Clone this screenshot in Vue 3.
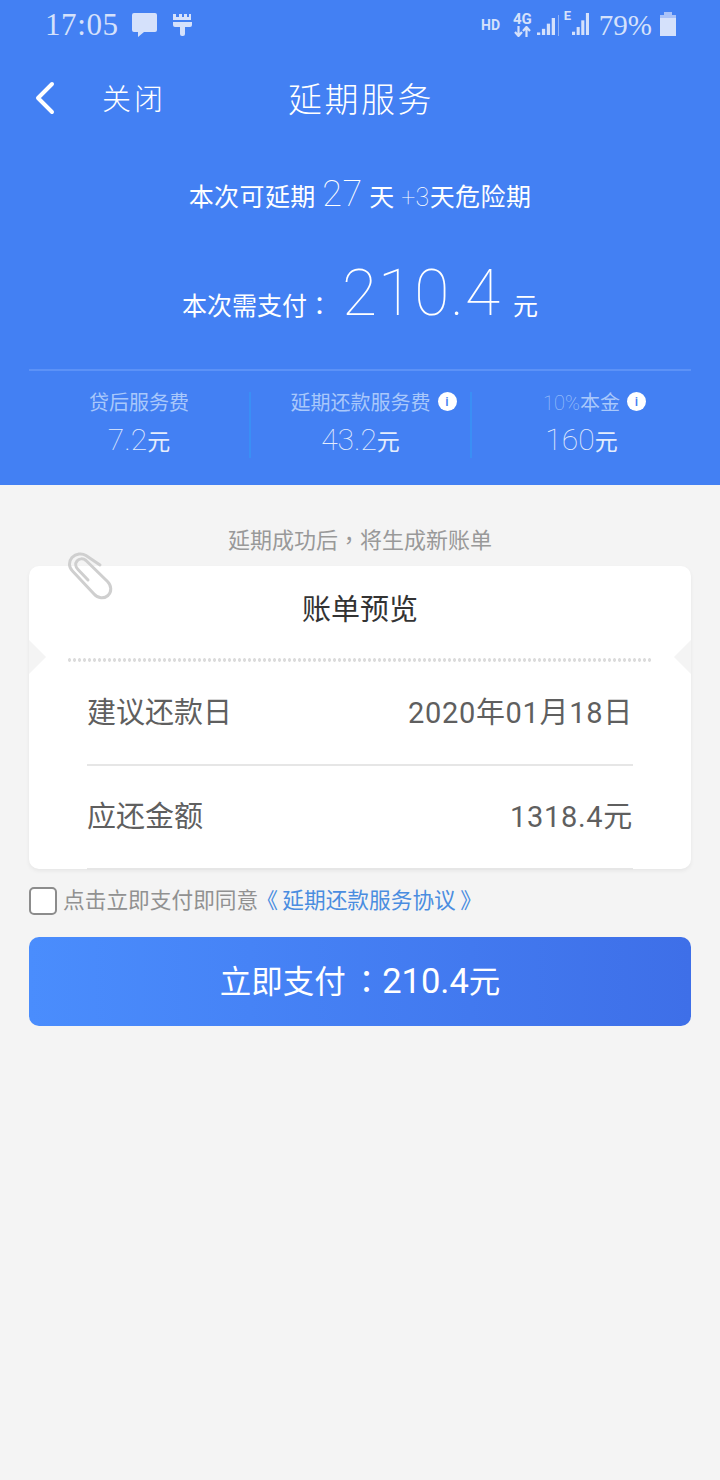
<template>
  <div class="page">
    <header class="hero">
      <div class="status-bar">
        <div class="status-left">
          <span class="time">17:05</span>
          <svg class="ico-msg" width="27" height="26" viewBox="0 0 27 26">
            <path d="M3 1h21a2 2 0 0 1 2 2v15a2 2 0 0 1-2 2H13l-6 5v-5H3a2 2 0 0 1-2-2V3a2 2 0 0 1 2-2z" fill="#d5e1fb" />
          </svg>
          <svg class="ico-brush" width="19" height="22" viewBox="0 0 19 22">
            <path d="M0 0h3v3h3V0h3v3h2V0h3v3h2V0h2v6H0zM0 8h19v3a2 2 0 0 1-2 2h-5v7a2 2 0 0 1-2 2H9a2 2 0 0 1-2-2v-7H2a2 2 0 0 1-2-2z" fill="#d5e1fb" />
          </svg>
        </div>
        <div class="status-right">
          <span class="hd">HD</span>
          <div class="net">
            <span class="net-label">4G</span>
            <svg width="17" height="11" viewBox="0 0 17 11">
              <path d="M4.500 0v9M1 6l3.500 4L8 6M12.500 11V2M9 5l3.500-4L16 5" stroke="#d5e1fb" stroke-width="2.200" fill="none" />
            </svg>
          </div>
          <svg class="bars bars-a" width="18" height="17" viewBox="0 0 22 24" preserveAspectRatio="none">
            <rect v-for="b in bars" :key="b.x" :x="b.x" :y="b.y" width="4" :height="24 - b.y" fill="#d5e1fb" />
          </svg>
          <span class="sep"></span>
          <span class="net-e">E</span>
          <svg class="bars bars-b" width="17" height="22" viewBox="0 0 22 24" preserveAspectRatio="none">
            <rect v-for="b in bars" :key="b.x" :x="b.x" :y="b.y" width="4" :height="24 - b.y" fill="#d5e1fb" />
          </svg>
          <span class="battery-text">79%</span>
          <svg class="battery" width="16" height="24" viewBox="0 0 16 24">
            <path d="M4 0h8v3H4z" fill="#a9c2f8" />
            <path d="M0 3h16v3H0z" fill="#a9c2f8" />
            <path d="M0 6h16v18H0z" fill="#d5e1fb" />
          </svg>
        </div>
      </div>

      <nav class="nav">
        <svg class="back" width="22" height="34" viewBox="0 0 22 34">
          <path d="M18 3L4 17l14 14" stroke="#fff" stroke-width="4" stroke-linecap="round" stroke-linejoin="round" fill="none" />
        </svg>
        <span class="close">关闭</span>
        <h1 class="title">延期服务</h1>
      </nav>

      <p class="days">本次可延期 <span class="thin big">27</span> 天 <span class="thin">+3</span>天危险期</p>
      <p class="pay">本次需支付<span class="punct">：</span><span class="pay-num">210.4</span><span>元</span></p>

      <div class="fees">
        <div v-for="fee in fees" :key="fee.value" class="fee">
          <div class="fee-label">
            <span class="fee-text">
              <span v-if="fee.pct" class="pct">{{ fee.pct }}</span>{{ fee.label }}
              <span v-if="fee.info" class="info">i</span>
            </span>
          </div>
          <div class="fee-value"><span class="thin">{{ fee.value }}</span>元</div>
        </div>
      </div>
    </header>

    <main class="content">
      <p class="hint">延期成功后<span class="punct">，</span>将生成新账单</p>

      <section class="card">
        <svg class="clip" width="46" height="50" viewBox="0 0 46 50">
          <path d="M33 13L19 3.500C15 1 9 1.500 5 5.500C1.500 9.500 1.500 15 5.500 19L27 42C31 46.500 37 47 41 43.500C45 39.500 44.500 33.500 40.500 29.500L19 8.500C16 6 12 6.500 10 9C8 11.500 8.500 15 11 17.500L21 28" stroke="#cfcfcf" stroke-width="3" fill="none" stroke-linecap="round" />
        </svg>
        <i class="notch notch-left"></i>
        <i class="notch notch-right"></i>
        <h2 class="card-title">账单预览</h2>
        <div class="dots"></div>
        <div class="rows">
          <div class="row">
            <span>建议还款日</span>
            <span class="row-value">2020年01月18日</span>
          </div>
          <div class="row">
            <span>应还金额</span>
            <span class="row-value">1318.4元</span>
          </div>
        </div>
      </section>

      <div class="agree">
        <span class="checkbox"></span>
        <span class="agree-text">点击立即支付即同意</span><span class="agree-text link">《 延期还款服务协议 》</span>
      </div>

      <button class="pay-btn">立即支付<span class="punct btn-colon">：</span><span class="btn-num">210.4</span>元</button>
    </main>
  </div>
</template>

<script setup>
const bars = [
  { x: 0, y: 20.400 },
  { x: 6, y: 15.300 },
  { x: 12, y: 8 },
  { x: 18, y: 0 }
]

const fees = [
  { label: '贷后服务费', value: '7.2' },
  { label: '延期还款服务费', value: '43.2', info: true },
  { label: '本金', pct: '10%', value: '160', info: true }
]
</script>

<style>
html,
body {
  margin: 0;
  background: #f4f4f4;
}
</style>

<style scoped>
.page {
  width: 720px;
  min-height: 1480px;
  background: #f4f4f4;
  font-family: Roboto, "Noto Sans CJK SC", sans-serif;
}

.hero {
  height: 485px;
  box-sizing: border-box;
  background: #4380f3;
  color: #fff;
}

.status-bar {
  height: 50px;
  box-sizing: border-box;
  padding: 0 44px 0 45px;
  display: flex;
  justify-content: space-between;
  align-items: center;
  color: #d5e1fb;
}

.status-left,
.status-right {
  display: flex;
  align-items: center;
}

.time {
  font-family: "Liberation Serif", serif;
  font-size: 31px;
  letter-spacing: 0.6px;
}

.ico-msg {
  margin-left: 12px;
  margin-bottom: 1px;
}

.ico-brush {
  margin-left: 15px;
}

.hd {
  font-size: 14px;
  font-weight: 700;
  margin-right: 13px;
}

.net {
  display: flex;
  flex-direction: column;
  align-items: center;
  margin-right: 5px;
}

.net-label {
  font-size: 15px;
  font-weight: 700;
  line-height: 13px;
}

.sep {
  width: 1px;
  height: 21px;
  margin: 0 5px 0 3px;
  background: #8fb1f6;
}

.net-e {
  width: 8px;
  font-size: 13px;
  font-weight: 700;
  align-self: flex-start;
  margin: 0;
  line-height: 14px;
}

.bars-a {
  margin-top: 3px;
}

.bars-b {
  margin-bottom: 2px;
}

.battery-text {
  font-family: "Liberation Serif", serif;
  font-size: 29px;
  margin: 0 8px 0 10px;
}

.battery {
  margin-bottom: 3px;
}

.nav {
  position: relative;
  height: 94px;
  display: flex;
  align-items: center;
}

.back {
  margin: 2px 0 0 34px;
}

.close {
  margin-left: 46px;
  font-size: 29px;
  letter-spacing: 3px;
  font-weight: 300;
}

.title {
  position: absolute;
  left: 2px;
  right: 0;
  margin: 0;
  text-align: center;
  font-size: 34px;
  font-weight: 300;
  letter-spacing: 2.500px;
}

.days {
  margin: 18px 0 0;
  height: 64px;
  line-height: 64px;
  text-align: center;
  font-size: 25px;
  letter-spacing: 0.4px;
}

.thin {
  font-family: Roboto, sans-serif;
  font-weight: 100;
}

.big {
  font-size: 36px;
}

.punct {
  font-family: "Noto Sans CJK TC", sans-serif;
}

.pay {
  margin: 30px 0 0;
  height: 76px;
  display: flex;
  justify-content: center;
  align-items: baseline;
  font-size: 25px;
}

.pay-num {
  font-weight: 100;
  font-size: 64px;
  margin: 0 12px 0 10px;
  letter-spacing: 1px;
}

.fees {
  margin: 37px 29px 0;
  padding-top: 21px;
  border-top: 2px solid #5c92f7;
  display: grid;
  grid-template-columns: 220px 221px 221px;
}

.fee {
  height: 66px;
  text-align: center;
  border-left: 2px solid #3a8ff5;
}

.fee:first-child {
  border-left: 0;
}

.fee-label {
  display: flex;
  justify-content: center;
  align-items: center;
  height: 18px;
  font-size: 20px;
  color: #a9c8fb;
}

.fee-text {
  position: relative;
}

.pct {
  font-weight: 100;
}

.info {
  position: absolute;
  left: 100%;
  top: 50%;
  width: 19px;
  height: 19px;
  margin: -9px 0 0 7px;
  border-radius: 50%;
  background: #fff;
  color: #4380f3;
  font-size: 13px;
  line-height: 19px;
  font-weight: 500;
}

.fee-value {
  margin-top: 12px;
  height: 36px;
  line-height: 36px;
  font-size: 23px;
  color: #e4edfd;
}

.fee-value .thin {
  font-size: 30px;
}

.content {
  padding: 38px 29px 0;
}

.hint {
  margin: 0;
  height: 30px;
  line-height: 30px;
  text-align: center;
  font-size: 22px;
  color: #999;
}

.card {
  position: relative;
  margin-top: 13px;
  height: 303px;
  box-sizing: border-box;
  background: #fff;
  border-radius: 10px;
  box-shadow: 0 2px 4px rgba(0, 0, 0, 0.06);
}

.clip {
  position: absolute;
  left: 38px;
  top: -14px;
}

.notch {
  position: absolute;
  top: 74px;
  width: 17px;
  height: 34px;
  background: #f4f4f4;
}

.notch-left {
  left: 0;
  clip-path: polygon(0 0, 100% 50%, 0 100%);
}

.notch-right {
  right: 0;
  clip-path: polygon(100% 0, 0 50%, 100% 100%);
}

.card-title {
  margin: 0;
  height: 88px;
  line-height: 88px;
  text-align: center;
  font-size: 29px;
  font-weight: 400;
  color: #333;
}

.dots {
  margin: 4px 38px 0;
  height: 4px;
  background: radial-gradient(circle, #dcdcdc 1.5px, transparent 2px) 0 0 / 5px 4px repeat-x;
}

.rows {
  margin: 0 58px;
}

.row {
  height: 104px;
  box-sizing: border-box;
  padding-bottom: 6px;
  display: flex;
  justify-content: space-between;
  align-items: center;
  border-bottom: 2px solid #e6e6e6;
  font-size: 29px;
  color: #5f5f5f;
}

.row-value {
  letter-spacing: 0.7px;
}

.agree {
  margin-top: 17px;
  height: 30px;
  display: flex;
  align-items: center;
  font-size: 21.700px;
  color: #919191;
}

.checkbox {
  width: 24px;
  height: 24px;
  margin-right: 6px;
  border: 2px solid #8c8c8c;
  border-radius: 5px;
  background: #fff;
}

.agree-text {
  margin-bottom: 6px;
}

.link {
  margin-left: -2px;
  word-spacing: -1px;
  color: #4a8de0;
}

.pay-btn {
  display: block;
  width: 100%;
  height: 89px;
  margin-top: 21px;
  padding: 0 0 5px;
  border: 0;
  border-radius: 10px;
  background: linear-gradient(90deg, #4a8dfd, #3e6fe8);
  color: #fff;
  font-family: inherit;
  font-size: 31.500px;
}

.btn-colon {
  margin-left: 5px;
}

.btn-num {
  font-size: 34.500px;
}
</style>
